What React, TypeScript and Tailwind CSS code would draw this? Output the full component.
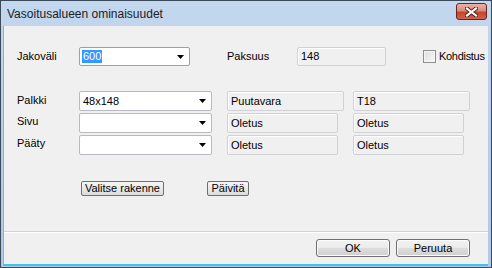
import React from 'react'

const ui = "font-['Liberation_Sans',Arial,sans-serif] text-[11px] text-black"

function Combo({ width, value, selected, focused }: { width: string; value?: string; selected?: boolean; focused?: boolean }) {
  return (
    <div
      className={`${width} h-full flex items-center justify-between bg-white border rounded-[2px] pl-[2px] pr-[5px] ${
        focused ? 'border-[#7fa6d4]' : 'border-[#b7bac0]'
      }`}
    >
      {selected ? (
        <span className="bg-[#3399ff] text-white px-[1px] leading-[13px]">{value}</span>
      ) : (
        <span className="pl-[1px]">{value}</span>
      )}
      <svg width="7" height="4" viewBox="0 0 7 4" className="shrink-0">
        <path d="M0 0H7L3.5 4Z" fill="#000" />
      </svg>
    </div>
  )
}

function ReadBox({ width, value }: { width: string; value: string }) {
  return (
    <div className={`${width} h-full flex items-center bg-[#f0f0f0] border border-[#cfd1d4] rounded-[2px] shadow-[inset_1px_1px_0_#ffffff] pl-[3px]`}>
      {value}
    </div>
  )
}

function SmallButton({ width, label }: { width: string; label: string }) {
  return (
    <div className={`${width} h-[15px] flex items-center justify-center rounded-[2px] border border-[#6f6f6f] bg-gradient-to-b from-[#f6f6f6] to-[#dcdcdc] leading-none`}>
      {label}
    </div>
  )
}

function DialogButton({ label }: { label: string }) {
  return (
    <div className="w-[74px] h-[18px] flex items-center justify-center rounded-[3px] border border-[#707070] bg-[linear-gradient(#f2f2f2_0%,#ebebeb_48%,#dddddd_52%,#cfcfcf_100%)] shadow-[inset_0_0_0_1px_#fcfcfc]">
      {label}
    </div>
  )
}

export default function App() {
  return (
    <div className={`${ui} w-[492px] h-[268px] flex flex-col border border-[#3b4a5b] bg-gradient-to-b from-[#c3d7ee] via-[#b7cee9] to-[#b0c9e6] pl-[2px] pr-[3px]`}>
      {/* title bar */}
      <div className="h-[25px] flex items-center justify-between pl-[4px] pr-[1px]">
        <span className="text-[12px] text-[#1c1c1c] pt-[1px]">Vasoitusalueen ominaisuudet</span>
        <div className="w-[31px] h-[17px] mb-[4px] flex items-center justify-center rounded-[3px] border border-[#6a2420] bg-[linear-gradient(#eab2a6_0%,#dc8b7a_45%,#c5452f_55%,#d2614c_100%)]">
          <svg width="13" height="10" viewBox="0 0 13 10">
            <path d="M2 1.5L11 8.5M11 1.5L2 8.5" stroke="#4a1d19" strokeWidth="4" strokeLinecap="square" />
            <path d="M2 1.5L11 8.5M11 1.5L2 8.5" stroke="#ffffff" strokeWidth="2.2" strokeLinecap="square" />
          </svg>
        </div>
      </div>

      {/* client area */}
      <div className="h-[238px] flex flex-col bg-[#f0f0f0] border-l border-[#8fb0d6]">
        <div className="h-[19px] mt-[21px] flex items-center pl-[13px]">
          <span className="w-[62px]">Jakoväli</span>
          <Combo width="w-[111px]" value="600" selected focused />
          <span className="w-[70px] ml-[37px]">Paksuus</span>
          <ReadBox width="w-[89px]" value="148" />
          <div className="ml-[37px] w-[13px] h-[13px] border border-[#8e8f8f] bg-gradient-to-br from-[#dedede] to-[#f8f8f8] shadow-[inset_0_0_0_1px_#f4f4f4]" />
          <span className="ml-[3px] tracking-[-0.3px] whitespace-nowrap">Kohdistus</span>
        </div>

        <div className="mt-[25px] flex flex-col gap-[2px]">
          <div className="h-[20px] flex items-center pl-[13px]">
            <span className="w-[62px] pb-[1px]">Palkki</span>
            <Combo width="w-[133px]" value="48x148" />
            <div className="w-[15px]" />
            <ReadBox width="w-[117px]" value="Puutavara" />
            <div className="w-[9px]" />
            <ReadBox width="w-[117px]" value="T18" />
          </div>
          <div className="h-[20px] flex items-center pl-[13px]">
            <span className="w-[62px] pb-[4px]">Sivu</span>
            <Combo width="w-[133px]" />
            <div className="w-[15px]" />
            <ReadBox width="w-[111px]" value="Oletus" />
            <div className="w-[15px]" />
            <ReadBox width="w-[111px]" value="Oletus" />
          </div>
          <div className="h-[20px] flex items-center pl-[13px]">
            <span className="w-[62px] pb-[4px]">Pääty</span>
            <Combo width="w-[133px]" />
            <div className="w-[15px]" />
            <ReadBox width="w-[111px]" value="Oletus" />
            <div className="w-[15px]" />
            <ReadBox width="w-[111px]" value="Oletus" />
          </div>
        </div>

        <div className="mt-[26px] flex items-center pl-[77px] gap-[43px]">
          <SmallButton width="w-[83px]" label="Valitse rakenne" />
          <SmallButton width="w-[42px]" label="Päivitä" />
        </div>

        <div className="mt-[35px] h-[2px] border-t border-[#c9d5e3] border-b border-b-white" />

        <div className="mt-[6px] flex justify-end gap-[6px] pr-[18px]">
          <DialogButton label="OK" />
          <DialogButton label="Peruuta" />
        </div>
      </div>
      <div className="h-[2px] bg-[#3fc4ee]" />
    </div>
  )
}
